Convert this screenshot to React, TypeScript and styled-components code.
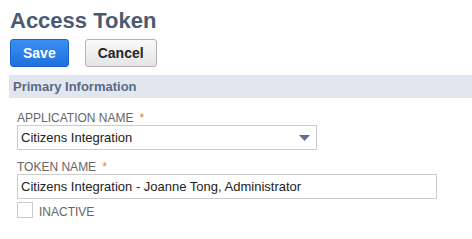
import styled, {createGlobalStyle} from 'styled-components'

const GlobalStyle = createGlobalStyle`
  body {
    margin: 0;
    background: #ffffff;
    font-family: 'Liberation Sans', Arial, sans-serif;
  }
`

const Page = styled.div`
  padding: 8px 0 0 10px;
`

const Title = styled.h1`
  margin: 0;
  font-size: 22px;
  line-height: 26px;
  font-weight: 700;
  color: #4b5a70;
`

const ButtonRow = styled.div`
  display: flex;
  gap: 16px;
  margin-top: 5px;
`

type ButtonProps = {
  primary?: boolean
}

const Button = styled.button<ButtonProps>`
  height: 28px;
  padding: 0 12px;
  border-radius: 3px;
  font-family: 'Liberation Sans', Arial, sans-serif;
  font-size: 14px;
  font-weight: 700;
  border: 1px solid ${(props) => (props.primary ? '#1b62c6' : '#b2b2b2')};
  color: ${(props) => (props.primary ? '#ffffff' : '#262626')};
  background: ${(props) =>
    props.primary
      ? 'linear-gradient(#3c8ff0, #1e70de)'
      : 'linear-gradient(#fafafa, #e4e4e4)'};
`

const SectionBar = styled.div`
  margin: 8px 0 0 -1px;
  height: 23px;
  display: flex;
  align-items: center;
  padding-left: 4px;
  background: #e1e6ef;
  font-size: 13px;
  font-weight: 700;
  color: #5b6a85;
`

const Fields = styled.div`
  padding: 13px 0 0 7px;
  display: flex;
  flex-direction: column;
`

type FieldProps = {
  width: number
}

const Field = styled.div<FieldProps>`
  width: ${(props) => props.width}px;
  & + & {
    margin-top: 10px;
  }
`

const Label = styled.div`
  font-size: 12px;
  line-height: 14px;
  color: #666666;
  text-transform: uppercase;
`

const Required = styled.span`
  color: #e0842c;
  margin-left: 6px;
`

const Box = styled.div`
  box-sizing: border-box;
  height: 25px;
  border: 1px solid #cccccc;
  display: flex;
  align-items: center;
  padding: 0 6px 0 3px;
  font-size: 13px;
  color: #222222;
`

const Value = styled.span`
  flex: 1;
`

const Arrow = styled.svg`
  width: 11px;
  height: 6px;
`

const CheckRow = styled.div`
  display: flex;
  align-items: flex-end;
  gap: 6px;
  margin-top: 3px;
`

const Check = styled.div`
  box-sizing: border-box;
  width: 16px;
  height: 16px;
  border: 1px solid #cccccc;
`

const CheckLabel = styled.span`
  font-size: 12px;
  line-height: 12px;
  color: #666666;
  text-transform: uppercase;
`

export default function App() {
  return (
    <Page>
      <GlobalStyle />
      <Title>Access Token</Title>
      <ButtonRow>
        <Button primary>Save</Button>
        <Button>Cancel</Button>
      </ButtonRow>
      <SectionBar>Primary Information</SectionBar>
      <Fields>
        <Field width={300}>
          <Label>
            Application Name<Required>*</Required>
          </Label>
          <Box>
            <Value>Citizens Integration</Value>
            <Arrow viewBox="0 0 11 6">
              <path d="M0 0 H11 L5.5 6 Z" fill="#5a7190" />
            </Arrow>
          </Box>
        </Field>
        <Field width={420}>
          <Label>
            Token Name<Required>*</Required>
          </Label>
          <Box>
            <Value>Citizens Integration - Joanne Tong, Administrator</Value>
          </Box>
        </Field>
        <CheckRow>
          <Check />
          <CheckLabel>Inactive</CheckLabel>
        </CheckRow>
      </Fields>
    </Page>
  )
}
